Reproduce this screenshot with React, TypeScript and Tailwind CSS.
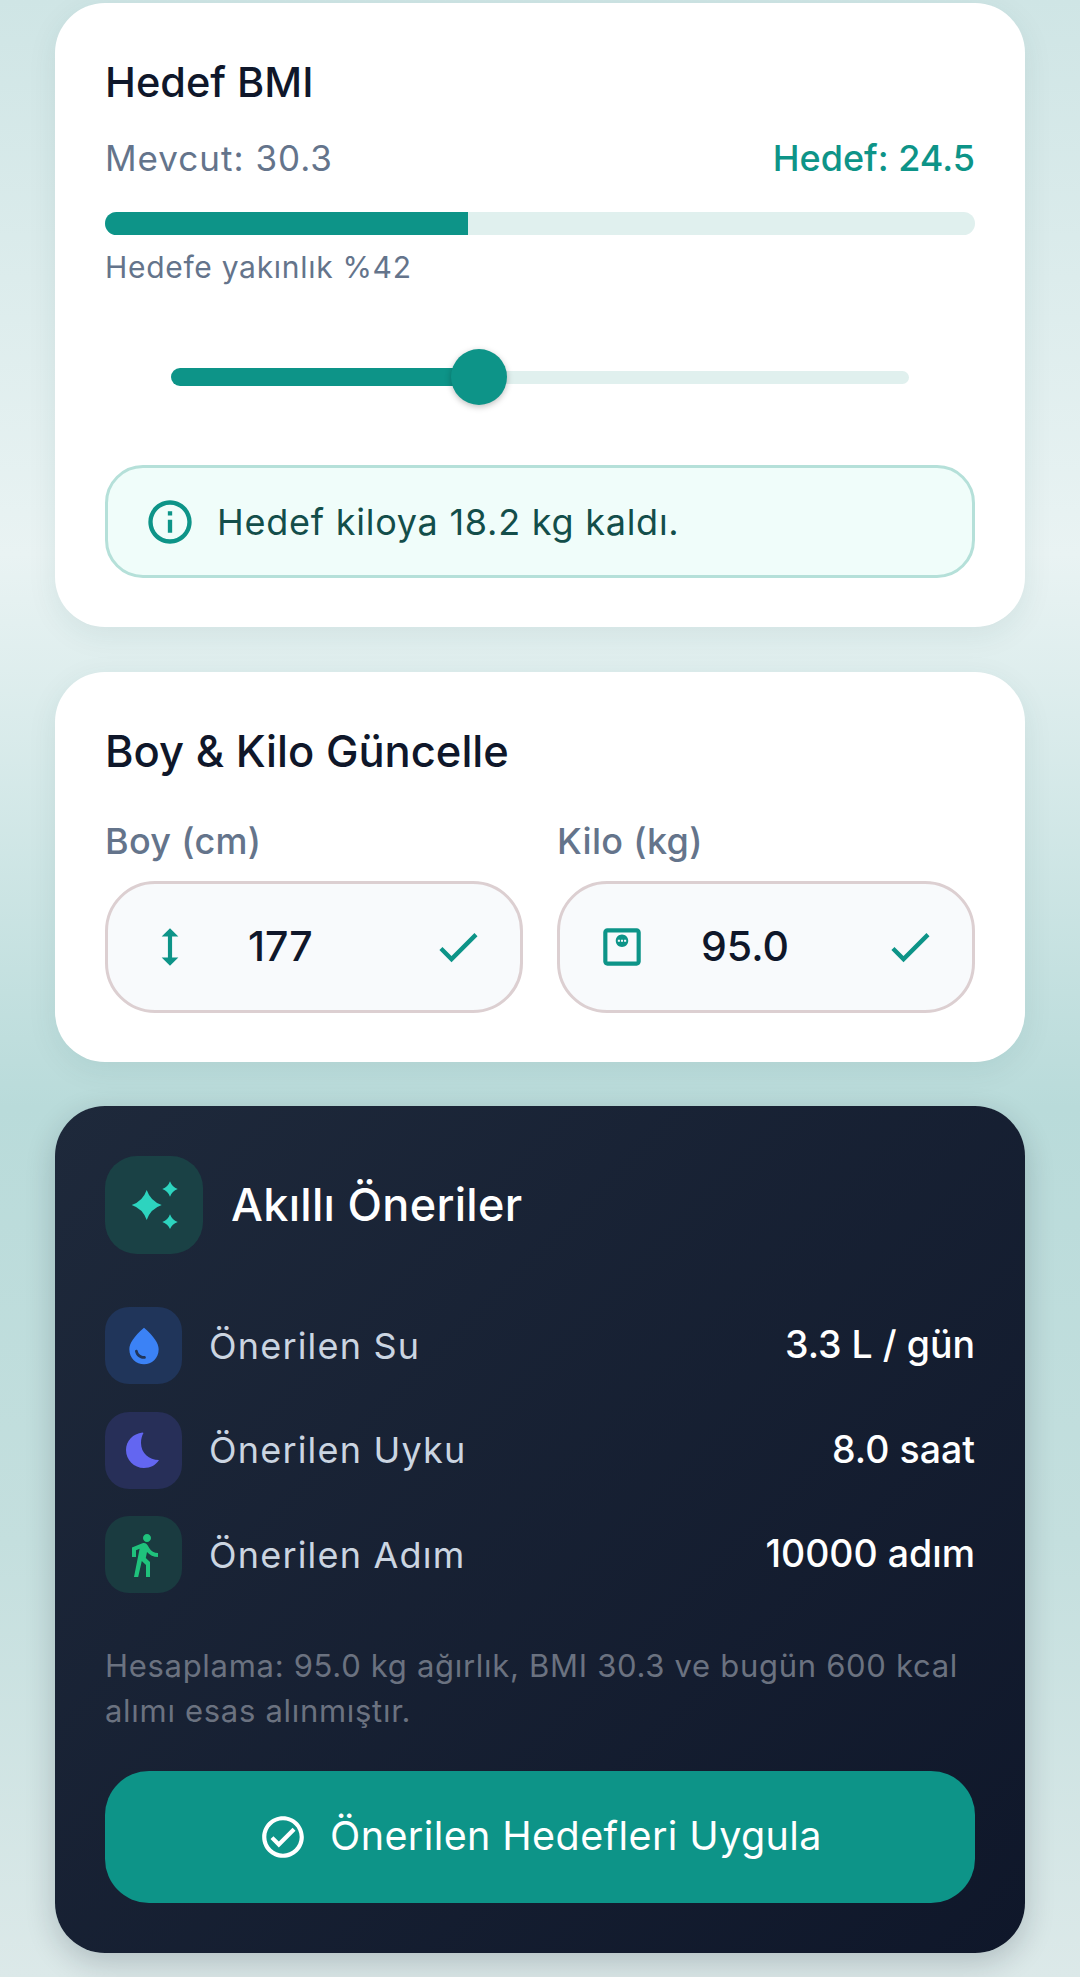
import { MdCheck, MdDirectionsWalk, MdHeight, MdInfoOutline, MdOutlineCheckCircle, MdOutlineMonitorWeight, MdWaterDrop } from 'react-icons/md';
import type { ReactNode } from 'react';

const suggestions = [
  { label: 'Önerilen Su', value: '3.3 L / gün', box: 'bg-[#20355a]', icon: <MdWaterDrop className="text-[#3b82f6] text-[44px]" /> },
  {
    label: 'Önerilen Uyku',
    value: '8.0 saat',
    box: 'bg-[#272f58]',
    icon: (
      <svg viewBox="0 0 36 36" className="size-[36px] text-[#6366f1]" fill="currentColor">
        <path d="M16.5 .5C7 1.5 0 9 0 18c0 10 8 18 18 18 6.5 0 12-3 15-8-10 0-18-7-18-17 0-4 1-7.5 2.5-10z" />
      </svg>
    ),
  },
  { label: 'Önerilen Adım', value: '10000 adım', box: 'bg-[#1a3b40]', icon: <MdDirectionsWalk className="text-[#1fc27c] text-[48px]" /> },
];

function MeasureInput({ label, value, icon, textClass }: { label: string; value: string; icon: ReactNode; textClass: string }) {
  return (
    <div className="flex-1 min-w-0">
      <div className="text-[36px] leading-[50px] tracking-[0.3px] font-medium text-[#64748b]">{label}</div>
      <div className="mt-[15px] h-[132px] rounded-[50px] border-[3px] border-[#dccfd1] bg-[#f8fafc] flex items-center pl-[42px] pr-[36px]">
        <span className="w-[40px] flex justify-center text-[#0d9488]">{icon}</span>
        <span className={`flex-1 text-[41px] font-medium text-[#0f172a] ${textClass}`}>{value}</span>
        <MdCheck className="text-[#0d9488] text-[52px]" />
      </div>
    </div>
  );
}

export default function App() {
  return (
    <div className="w-[1080px] h-[1977px] overflow-hidden px-[55px] pt-[3.3px] flex flex-col gap-[44.4px] font-['Inter',sans-serif] bg-[linear-gradient(180deg,#cfe5e5_0%,#e9f3f3_28%,#b9dbda_56%,#c4dfde_78%,#dce9e9_100%)]">
      {/* Hedef BMI */}
      <div className="h-[624px] shrink-0 rounded-[50px] bg-white px-[50px] pt-[54px] shadow-[0_8px_30px_rgba(15,80,80,0.08)]">
        <h2 className="text-[41.5px] leading-[50px] font-medium text-[#0f172a]">Hedef BMI</h2>
        <div className="mt-[26px] flex items-center justify-between h-[50px]">
          <span className="text-[35px] tracking-[1px] text-[#64748b]">Mevcut: 30.3</span>
          <span className="text-[36px] font-medium text-[#0d9488]">Hedef: 24.5</span>
        </div>
        <div className="mt-[29px] h-[23px] rounded-full bg-[#e0f0ee] overflow-hidden">
          <div className="h-full w-[363px] bg-[#0d9488]" />
        </div>
        <div className="mt-[12px] text-[30px] leading-[40px] tracking-[0.7px] text-[#64748b]">Hedefe yakınlık %42</div>

        <div className="mt-[62px] mx-[66px] h-[56px] flex items-center">
          <div className="h-[18px] w-[286px] rounded-l-full bg-[#0d9488]" />
          <div className="relative z-10 -mx-[6px] size-[56px] rounded-full bg-[#0d9488] shadow-[0_2px_6px_rgba(0,0,0,0.25)] shrink-0" />
          <div className="flex-1 h-[13px] rounded-r-full bg-[#e0f0ee]" />
        </div>

        <div className="mt-[60px] h-[113px] rounded-[38px] border-[3px] border-[#b5e0d9] bg-[#f0fdfa] flex items-center pl-[36px] gap-[21px]">
          <MdInfoOutline className="text-[#0d9488] text-[52px]" />
          <span className="text-[36px] tracking-[0.75px] text-[#134e4a]">Hedef kiloya 18.2 kg kaldı.</span>
        </div>
      </div>

      {/* Boy & Kilo */}
      <div className="h-[390px] shrink-0 rounded-[50px] bg-white px-[50px] pt-[54px] shadow-[0_8px_30px_rgba(15,80,80,0.08)]">
        <h2 className="text-[43.5px] leading-[50px] font-medium text-[#0f172a]">Boy &amp; Kilo Güncelle</h2>
        <div className="mt-[40px] flex gap-[34px]">
          <MeasureInput label="Boy (cm)" value="177" textClass="pl-[58px]" icon={<MdHeight className="text-[50px] shrink-0" />} />
          <MeasureInput label="Kilo (kg)" value="95.0" textClass="pl-[59px]" icon={<MdOutlineMonitorWeight className="text-[50px] shrink-0" />} />
        </div>
      </div>

      {/* Akıllı Öneriler */}
      <div className="h-[847px] shrink-0 rounded-[50px] bg-[linear-gradient(135deg,#1e293b,#0f172a)] px-[50px] pt-[50px] shadow-[0_10px_30px_rgba(15,23,42,0.2)]">
        <div className="flex items-center gap-[28px]">
          <div className="size-[98px] rounded-[32px] bg-[#1a4145] flex items-center justify-center">
            <svg viewBox="0 0 48 48" className="size-[48px] text-[#2dd4bf]" fill="currentColor">
              <path d="M16.7 9Q20.5 20.2 31.7 24Q20.5 27.8 16.7 39Q12.9 27.8 1.7 24Q12.9 20.2 16.7 9Z" />
              <path d="M40 .3Q42 6 47.7 8Q42 10 40 15.7Q38 10 32.3 8Q38 6 40 .3Z" />
              <path d="M40 33.3Q42 39 47.7 41Q42 43 40 48Q38 43 32.3 41Q38 39 40 33.3Z" />
            </svg>
          </div>
          <h2 className="text-[45px] tracking-[0.3px] font-medium text-white">Akıllı Öneriler</h2>
        </div>

        <div className="mt-[53px] flex flex-col gap-[27.5px]">
          {suggestions.map((s) => (
            <div key={s.label} className="flex items-center">
              <div className={`size-[77px] rounded-[24px] flex items-center justify-center ${s.box}`}>{s.icon}</div>
              <span className="ml-[27px] flex-1 text-[36px] tracking-[1.2px] text-[#cbd5e1]">{s.label}</span>
              <span className="text-[37.5px] font-medium text-white">{s.value}</span>
            </div>
          ))}
        </div>

        <p className="mt-[50px] text-[31px] leading-[45px] tracking-[0.7px] text-[#6b7280]">
          Hesaplama: 95.0 kg ağırlık, BMI 30.3 ve bugün 600 kcal alımı esas alınmıştır.
        </p>

        <button className="mt-[38px] w-full h-[132px] rounded-[44px] bg-[#0d9488] flex items-center justify-center gap-[22px] text-white">
          <MdOutlineCheckCircle className="text-[50px]" />
          <span className="text-[39.5px] tracking-[0.4px]">Önerilen Hedefleri Uygula</span>
        </button>
      </div>
    </div>
  );
}
